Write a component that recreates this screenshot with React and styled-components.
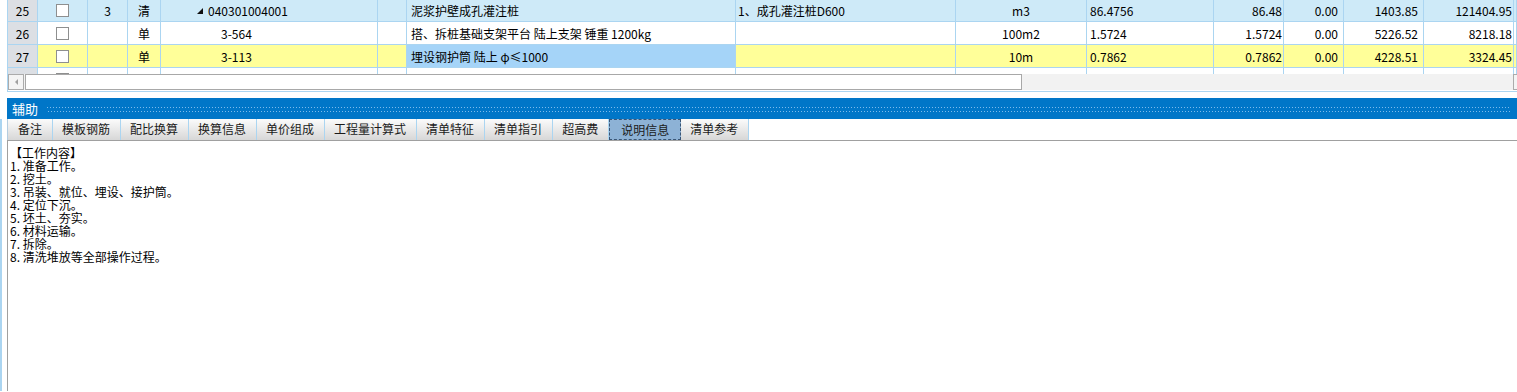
import styled, { createGlobalStyle } from "styled-components";

const GlobalStyle = createGlobalStyle`
  html, body { margin: 0; padding: 0; background: #fff; }
  body {
    font-family: "Noto Sans CJK SC", "Noto Sans", sans-serif;
    font-size: 12px;
    color: #000;
  }
  #root { width: 1517px; height: 392px; overflow: hidden; }
`;

const LINE = "#abd5f1";
const COLS =
  "30px 50px 40px 33px 217px 29px 329px 220px 131px 127px 70px 60px 80px 90px 1fr";

const rows = [
  {
    no: "25",
    tone: "list",
    level: "3",
    kind: "清",
    code: "040301004001",
    top: true,
    name: "泥浆护壁成孔灌注桩",
    feature: "1、成孔灌注桩D600",
    unit: "m3",
    qty: "86.4756",
    v1: "86.48",
    v2: "0.00",
    v3: "1403.85",
    v4: "121404.95",
  },
  {
    no: "26",
    tone: "plain",
    level: "",
    kind: "单",
    code: "3-564",
    name: "搭、拆桩基础支架平台 陆上支架 锤重 1200kg",
    feature: "",
    unit: "100m2",
    qty: "1.5724",
    v1: "1.5724",
    v2: "0.00",
    v3: "5226.52",
    v4: "8218.18",
  },
  {
    no: "27",
    tone: "current",
    level: "",
    kind: "单",
    code: "3-113",
    name: "埋设钢护筒 陆上 φ≤1000",
    selected: true,
    feature: "",
    unit: "10m",
    qty: "0.7862",
    v1: "0.7862",
    v2: "0.00",
    v3: "4228.51",
    v4: "3324.45",
  },
];

const tabs = [
  "备注",
  "模板钢筋",
  "配比换算",
  "换算信息",
  "单价组成",
  "工程量计算式",
  "清单特征",
  "清单指引",
  "超高费",
  "说明信息",
  "清单参考",
];

const notes = [
  "【工作内容】",
  "1. 准备工作。",
  "2. 挖土。",
  "3. 吊装、就位、埋设、接护筒。",
  "4. 定位下沉。",
  "5. 坯土、夯实。",
  "6. 材料运输。",
  "7. 拆除。",
  "8. 清洗堆放等全部操作过程。",
];

const toneColor = {
  list: "#ceeaf8",
  plain: "#ffffff",
  current: "#ffff99",
};

const CollapseMark = () => (
  <svg width="6" height="6" viewBox="0 0 6 6">
    <polygon points="6,0 6,6 0,6" fill="#111" />
  </svg>
);

const App = () => {
  return (
    <>
      <GlobalStyle />
      <TopPane>
        <GridBody>
          <RowsWrap>
            {rows.map((r) => (
              <Row key={r.no} $tone={r.tone}>
                <NumCell>{r.no}</NumCell>
                <Cell $align="center">
                  <Check />
                </Cell>
                <Cell $align="center">{r.level}</Cell>
                <Cell $align="center">{r.kind}</Cell>
                <Cell $pad={r.top ? "0 0 0 36px" : "0 0 0 60px"}>
                  {r.top && <CollapseMark />}
                  {r.top ? <CodeText>{r.code}</CodeText> : r.code}
                </Cell>
                <Cell />
                <Cell $pad="0 0 0 4px" $bg={r.selected ? "#a5d4f8" : null}>
                  {r.name}
                </Cell>
                <Cell $pad="0 0 0 2px">{r.feature}</Cell>
                <Cell $align="center">{r.unit}</Cell>
                <Cell $pad="0 0 0 3px">{r.qty}</Cell>
                <Cell $align="flex-end" $pad="0 1px 0 0">
                  {r.v1}
                </Cell>
                <Cell $align="flex-end" $pad="0 5px 0 0">
                  {r.v2}
                </Cell>
                <Cell $align="flex-end" $pad="0 5px 0 0">
                  {r.v3}
                </Cell>
                <Cell $align="flex-end" $pad="0 1px 0 0">
                  {r.v4}
                </Cell>
                <Cell />
              </Row>
            ))}
            <Row $tone="plain">
              <NumCell />
              <Cell $align="center">
                <Check />
              </Cell>
              {Array.from({ length: 13 }).map((_, i) => (
                <Cell key={i} />
              ))}
            </Row>
          </RowsWrap>
        </GridBody>
        <Scrollbar>
          <ScrollButton>
            <ArrowLeft />
          </ScrollButton>
          <Thumb />
          <Track />
          <ScrollButton />
        </Scrollbar>
      </TopPane>

      <LowerPane>
        <BlueBar>
          <BarTitle>辅助</BarTitle>
          <Dots />
        </BlueBar>
        <TabArea>
          <TabBar>
            {tabs.map((t, i) => (
              <Tab key={t} $first={i === 0} $active={t === "说明信息"}>
                {t}
              </Tab>
            ))}
          </TabBar>
          <Content>
            {notes.map((n) => (
              <NoteLine key={n}>{n}</NoteLine>
            ))}
          </Content>
        </TabArea>
      </LowerPane>
    </>
  );
};

export default App;

const TopPane = styled.div`
  margin-left: 7px;
  border-left: 1px solid ${LINE};
  border-bottom: 1px solid ${LINE};
  overflow: hidden;
`;
const GridBody = styled.div`
  height: 74px;
  overflow: hidden;
`;
const RowsWrap = styled.div`
  margin-top: -1px;
`;
const Row = styled.div`
  display: grid;
  grid-template-columns: ${COLS};
  height: 23px;
  box-sizing: border-box;
  border-bottom: 1px solid ${LINE};
  background: ${({ $tone }) => toneColor[$tone]};
`;
const Cell = styled.div`
  display: flex;
  align-items: center;
  justify-content: ${({ $align }) => $align || "flex-start"};
  padding: ${({ $pad }) => $pad || "0"};
  padding-top: 2px;
  border-right: 1px solid ${LINE};
  box-sizing: border-box;
  white-space: nowrap;
  overflow: hidden;
  line-height: 20px;
  background: ${({ $bg }) => $bg || "transparent"};
`;
const NumCell = styled(Cell)`
  justify-content: center;
  background: #dcdfe4;
`;
const CodeText = styled.span`
  margin-left: 5px;
`;
const Check = styled.span`
  width: 13px;
  height: 13px;
  margin-top: -1px;
  box-sizing: border-box;
  border: 1px solid #8e8f8f;
  background: #fff;
`;
const Scrollbar = styled.div`
  display: flex;
  width: calc(100% + 12px);
  height: 16px;
  margin-bottom: 1px;
  background: #f2f2f2;
`;
const ScrollButton = styled.div`
  width: 16px;
  height: 16px;
  flex-shrink: 0;
  box-sizing: border-box;
  border: 1px solid #ababab;
  background: #f4f4f4;
  display: flex;
  align-items: center;
  justify-content: center;
`;
const ArrowLeft = styled.span`
  width: 0;
  height: 0;
  border-top: 3px solid transparent;
  border-bottom: 3px solid transparent;
  border-right: 3px solid #a0a0a0;
`;
const Thumb = styled.div`
  width: 997px;
  height: 16px;
  margin-left: 1px;
  box-sizing: border-box;
  border: 1px solid #a8a8a8;
  background: #fff;
`;
const Track = styled.div`
  flex: 1;
`;
const LowerPane = styled.div`
  margin-top: 6px;
`;
const BlueBar = styled.div`
  margin-left: 7px;
  height: 21px;
  background: #0076c8;
  display: flex;
  align-items: center;
  padding-left: 5px;
  padding-right: 7px;
`;
const BarTitle = styled.span`
  color: #fff;
  font-size: 13px;
  line-height: 21px;
`;
const Dots = styled.span`
  flex: 1;
  height: 6px;
  margin-left: 9px;
  margin-top: 2px;
  background-image: radial-gradient(
      circle at 0.5px 0.5px,
      #7dbbec 0.6px,
      transparent 0.9px
    ),
    radial-gradient(circle at 0.5px 0.5px, #7dbbec 0.6px, transparent 0.9px);
  background-size: 3px 4px, 3px 4px;
  background-position: 0 0, 1px 4px;
  background-repeat: repeat-x, repeat-x;
`;
const TabArea = styled.div`
  border-left: 2px solid ${LINE};
  padding-left: 5px;
`;
const TabBar = styled.div`
  display: flex;
  height: 21px;
`;
const Tab = styled.div`
  box-sizing: border-box;
  height: 21px;
  line-height: 20px;
  padding: ${({ $first }) => ($first ? "0 10px" : "0 10px 0 9px")};
  color: #1a1a1a;
  white-space: nowrap;
  border-left: ${({ $first }) => ($first ? `1px solid #b5cde0` : "none")};
  border-right: 1px solid ${LINE};
  background: linear-gradient(#fbfbfb, #d7d7d7);
  ${({ $active }) =>
    $active &&
    `
      background: #8db2d6;
      border: 1px dashed #3a5676;
      padding: 0 11px;
      line-height: 19px;
    `}
`;
const Content = styled.div`
  height: 251px;
  box-sizing: border-box;
  border-left: 1px solid #a0a0a0;
  border-top: 1px solid #a0a0a0;
  padding: 5px 2px;
`;
const NoteLine = styled.div`
  height: 13px;
  line-height: 13px;
  font-size: 12px;
  white-space: pre;
`;
